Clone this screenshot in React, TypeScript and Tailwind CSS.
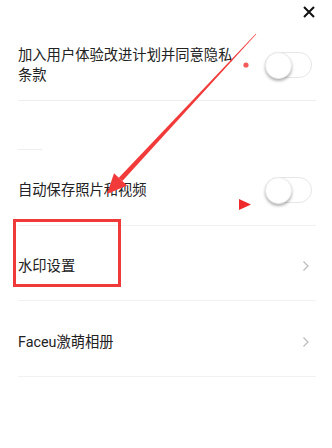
import React from "react";

function Toggle() {
  return (
    <div className="relative w-[47px] h-[26px] rounded-full border border-[#e6e6e6] bg-white shrink-0">
      <div className="absolute left-[-1px] top-[-1px] w-[27px] h-[27px] rounded-full bg-white border border-[#ececec] shadow-[0_2px_3px_rgba(0,0,0,0.3)]" />
    </div>
  );
}

function Chevron() {
  return (
    <svg width="8" height="12" viewBox="0 0 8 12" className="shrink-0">
      <path d="M1.5 1.5 L6 6 L1.5 10.5" fill="none" stroke="#bdbdbd" strokeWidth="1.3" />
    </svg>
  );
}

export default function App() {
  return (
    <div
      className="relative w-[332px] h-[448px] bg-white overflow-hidden text-[#222]"
      style={{ fontFamily: "Roboto, 'Noto Sans CJK SC', sans-serif" }}
    >
      {/* header */}
      <div className="h-[30px] flex justify-end items-start pr-[17px] pt-[6px]">
        <svg width="12" height="12" viewBox="0 0 12 12">
          <path d="M1 1 L11 11 M11 1 L1 11" stroke="#111" strokeWidth="2" />
        </svg>
      </div>

      <div className="pl-[18px] pr-[16px]">
        {/* row 1 */}
        <div className="h-[71px] flex items-center justify-between border-b border-[#eeeeee]">
          <div className="w-[222px] text-[14.3px] leading-[20px]">加入用户体验改进计划并同意隐私条款</div>
          <div className="pr-[4px]">
            <Toggle />
          </div>
        </div>

        <div className="h-[48px]" />
        <div className="w-[24px] h-px bg-[#eeeeee]" />

        {/* row 2 */}
        <div className="h-[76px] pt-[4px] flex items-center justify-between border-b border-[#f1f1f1]">
          <div className="text-[14.3px] leading-[20px]">自动保存照片和视频</div>
          <div className="pr-[4px]">
            <Toggle />
          </div>
        </div>

        {/* row 3 */}
        <div className="h-[75px] pt-[6px] flex items-center justify-between border-b border-[#f1f1f1]">
          <div className="text-[14.3px] leading-[20px]">水印设置</div>
          <div className="pr-[6px]">
            <Chevron />
          </div>
        </div>

        {/* row 4 */}
        <div className="h-[76px] pt-[6px] flex items-center justify-between border-b border-[#f1f1f1]">
          <div className="text-[14.3px] leading-[20px]">Faceu激萌相册</div>
          <div className="pr-[6px]">
            <Chevron />
          </div>
        </div>
      </div>

      {/* annotations */}
      <div className="absolute left-[13px] top-[219px] w-[108px] h-[68px] border-[3px] border-[#f03a3a]" />
      <svg className="absolute inset-0 pointer-events-none" width="332" height="448" viewBox="0 0 332 448">
        <circle cx="246" cy="65" r="2.6" fill="#f45a5a" />
        <polygon points="239,199 251,204.5 239,210" fill="#f02a2a" />
        <polygon points="256.2,34.2 255.8,33.8 118.8,177.7 122.4,181.1" fill="#f23a3a" />
        <polygon points="107,194 114,173.3 127.2,185.5" fill="#f23a3a" />
      </svg>
    </div>
  );
}
